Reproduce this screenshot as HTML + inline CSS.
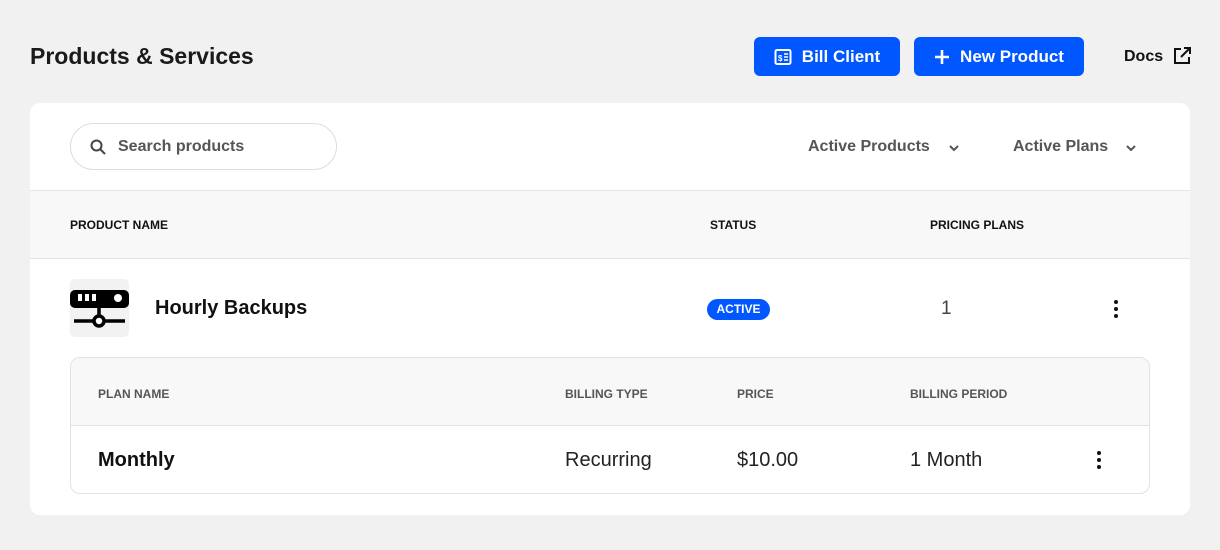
<!DOCTYPE html>
<html><head><style>
*{box-sizing:border-box;margin:0;padding:0}
body{width:1220px;height:550px;background:#f1f1f1;font-family:"Liberation Sans",sans-serif;position:relative;color:#111;overflow:hidden}
.abs{position:absolute}
h1{position:absolute;left:30px;top:43px;font-size:23px;font-weight:bold;color:#1a1a1a}
.btn{position:absolute;top:37px;height:39px;background:#0057ff;color:#fff;border-radius:6px;font-weight:bold;font-size:17px;display:flex;align-items:center;justify-content:center;gap:10px}
.card{position:absolute;left:30px;top:103px;width:1160px;height:412px;background:#fff;border-radius:10px;overflow:hidden}
.th{font-size:12px;font-weight:bold;color:#111;position:absolute}
.sub{position:absolute;left:40px;top:254px;width:1080px;height:137px;border:1px solid #e2e2e2;border-radius:10px;overflow:hidden}
.sth{font-size:12px;font-weight:bold;color:#555;position:absolute;top:29px}
.dots{position:absolute;width:4px}
.dots i{display:block;width:4px;height:4px;border-radius:2px;background:#111;margin-bottom:3px}
</style></head><body>
<h1>Products &amp; Services</h1>
<div class="btn" style="left:754px;width:146px">
<svg width="18" height="18" viewBox="0 0 18 18"><rect x="1.5" y="2" width="15" height="14" rx="1.5" fill="none" stroke="#fff" stroke-width="2"/><text x="4" y="13" font-size="8" font-weight="bold" fill="#fff" font-family="Liberation Sans">$</text><path d="M10 6h4M10 9h4M10 12h4" stroke="#fff" stroke-width="1.5"/></svg>Bill Client</div>
<div class="btn" style="left:914px;width:170px"><svg width="16" height="16"><path d="M8 1v14M1 8h14" stroke="#fff" stroke-width="2.6"/></svg>New Product</div>
<div class="abs" style="left:1124px;top:48px;font-weight:bold;font-size:16px">Docs</div>
<svg class="abs" style="left:1173px;top:47px" width="18" height="18" viewBox="0 0 18 18"><path d="M8 2H2v14h14v-6" fill="none" stroke="#111" stroke-width="2"/><path d="M11 1h6v6M17 1 8 10" fill="none" stroke="#111" stroke-width="2"/></svg>
<div class="card">
 <div class="abs" style="left:40px;top:20px;width:267px;height:47px;border:1px solid #ddd;border-radius:24px"></div>
 <svg class="abs" style="left:60px;top:36px" width="16" height="16"><circle cx="6.5" cy="6.5" r="5" fill="none" stroke="#444" stroke-width="2"/><path d="M10.5 10.5 15 15" stroke="#444" stroke-width="2"/></svg>
 <div class="abs" style="left:88px;top:35px;font-size:16px;font-weight:bold;color:#555">Search products</div>
 <div class="abs" style="left:778px;top:35px;font-size:16px;font-weight:bold;color:#555">Active Products</div>
 <svg class="abs" style="left:919px;top:42px" width="10" height="7"><path d="M1 1l4 4 4-4" fill="none" stroke="#555" stroke-width="2"/></svg>
 <div class="abs" style="left:983px;top:35px;font-size:16px;font-weight:bold;color:#555">Active Plans</div>
 <svg class="abs" style="left:1096px;top:42px" width="10" height="7"><path d="M1 1l4 4 4-4" fill="none" stroke="#555" stroke-width="2"/></svg>
 <div class="abs" style="left:0;top:87px;width:1160px;height:69px;background:#f8f8f8;border-top:1px solid #e5e5e5;border-bottom:1px solid #e5e5e5"></div>
 <div class="th" style="left:40px;top:115px">PRODUCT NAME</div>
 <div class="th" style="left:680px;top:115px">STATUS</div>
 <div class="th" style="left:900px;top:115px">PRICING PLANS</div>
 <div class="abs" style="left:40px;top:176px;width:59px;height:58px;background:#f2f2f2;border-radius:5px"></div>
 <svg class="abs" style="left:40px;top:176px" width="59" height="58" viewBox="0 0 59 58"><rect x="0" y="11" width="59" height="18" rx="5" fill="#000"/><rect x="8" y="15" width="4" height="7" fill="#fff"/><rect x="15" y="15" width="4" height="7" fill="#fff"/><rect x="22" y="15" width="4" height="7" fill="#fff"/><circle cx="48" cy="19" r="4" fill="#fff"/><path d="M29 29v9M4 42h51" stroke="#000" stroke-width="3.5"/><circle cx="29" cy="42" r="5" fill="#fff" stroke="#000" stroke-width="3.5"/></svg>
 <div class="abs" style="left:125px;top:194px;font-size:20px;font-weight:bold">Hourly Backups</div>
 <div class="abs" style="left:677px;top:196px;width:63px;height:21px;background:#0057ff;color:#fff;border-radius:11px;font-size:12px;font-weight:bold;text-align:center;line-height:21px">ACTIVE</div>
 <div class="abs" style="left:911px;top:195px;font-size:19px;color:#444">1</div>
 <div class="dots" style="left:1084px;top:197px"><i></i><i></i><i></i></div>
 <div class="sub">
  <div class="abs" style="left:0;top:0;width:1080px;height:68px;background:#f8f8f8;border-bottom:1px solid #e2e2e2"></div>
  <div class="sth" style="left:27px">PLAN NAME</div>
  <div class="sth" style="left:494px">BILLING TYPE</div>
  <div class="sth" style="left:666px">PRICE</div>
  <div class="sth" style="left:839px">BILLING PERIOD</div>
  <div class="abs" style="left:27px;top:91px;font-size:20px;font-weight:bold">Monthly</div>
  <div class="abs" style="left:494px;top:91px;font-size:20px;color:#222">Recurring</div>
  <div class="abs" style="left:666px;top:91px;font-size:20px;color:#222">$10.00</div>
  <div class="abs" style="left:839px;top:91px;font-size:20px;color:#222">1 Month</div>
  <div class="dots" style="left:1026px;top:93px"><i></i><i></i><i></i></div>
 </div>
</div>
</body></html>
